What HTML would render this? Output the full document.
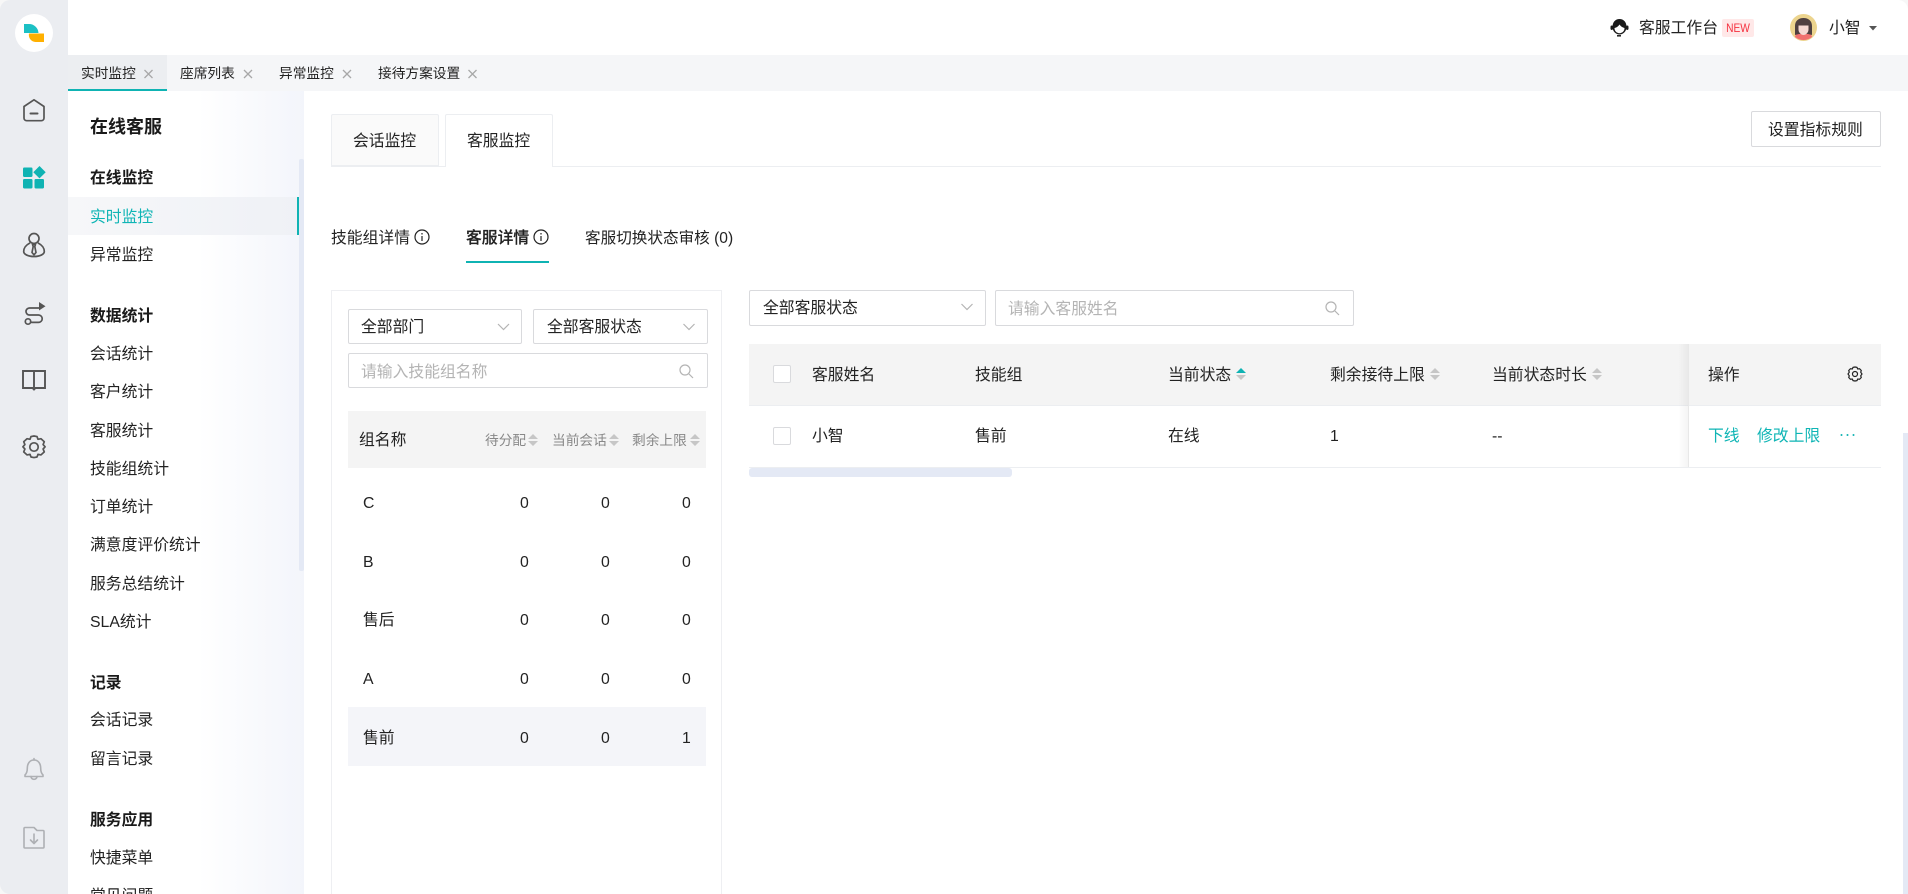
<!DOCTYPE html>
<html lang="zh-CN"><head><meta charset="utf-8"><title>实时监控</title>
<style>
*{box-sizing:border-box;margin:0;padding:0}
html,body{width:1908px;height:894px;overflow:hidden;background:#fff}
body{position:relative;font-family:"Liberation Sans","Noto Sans CJK SC",sans-serif;font-size:15.8px;color:#222}
.a{position:absolute}
.t{position:absolute;white-space:nowrap;line-height:24px;height:24px;margin-top:1px}
.b{font-weight:700;color:#1a1a1a}
.s{font-size:13.7px}
.box{position:absolute;border:1px solid #d9dadd;border-radius:2px;background:#fff}
.g{color:#888}
.ph{color:#b4b4b4}
.l{color:#0fb5b5}
svg{position:absolute;display:block;overflow:visible}
</style></head><body>

<!-- sidebar -->
<div class="a" style="left:0;top:0;width:68px;height:894px;background:#ebedf1"></div>
<div class="a" style="left:15px;top:14px;width:38px;height:38px;border-radius:50%;background:#fff"></div>
<svg style="left:0;top:0" width="68" height="480">
<path d="M24 24h5a9.500 9.500 0 0 1 9.500 9H24z" fill="#1cc0c4"/>
<path d="M29 33.500H44V42h-8.500a7 7 0 0 1-6.500-8.500z" fill="#ffb000"/>
<g fill="none" stroke="#555" stroke-width="1.700" stroke-linejoin="round" stroke-linecap="round">
<path d="M24 106.500 34 99.800l10 6.700v11.500a2.700 2.700 0 0 1-2.700 2.700H26.700a2.700 2.700 0 0 1-2.700-2.700z"/>
<path d="M30.500 113.500h7" stroke-width="2"/>
<circle cx="34" cy="238.500" r="5"/>
<path d="M29.500 243.200c-3.500 1.800-5.800 5-5.800 8.300 0 2.800 4.500 5 10.300 5s10.300-2.200 10.300-5c0-3.300-2.300-6.500-5.800-8.300"/>
<path d="M32.500 244.500h3l-.7 2 1.200 6-2 2.300-2-2.300 1.200-6z"/>
<path d="M39 308H29.500a3.500 3.500 0 0 0 0 7h9a3.700 3.700 0 0 1 0 7.400H31.500"/>
<circle cx="28" cy="321.500" r="2.700"/>
<path d="M23 371h22v17H35.500L34 389.500 32.500 388H23z" stroke-linejoin="miter" stroke-width="1.900"/>
<path d="M34 371v17" stroke-width="1.900"/>
<path d="M34 436.500l3 .6 1 2.700 3-.6 3.300 3-1.200 2.900 2 2.200-2 2.200 1.200 2.900-3.300 3-3-.6-1 2.700-3 .6-3-.6-1-2.700-3 .6-3.300-3 1.200-2.900-2-2.200 2-2.200-1.200-2.900 3.300-3 3 .6 1-2.700z" transform="translate(0 -.5)"/>
<circle cx="34" cy="447" r="4.200"/>
</g>
<path d="M39 302v8.500l6.500-4.200z" fill="#555"/>
<g fill="#0fb3b3">
<rect x="23" y="167.500" width="9.500" height="9.500" rx="1.200"/>
<rect x="23" y="179" width="9.500" height="9.500" rx="1.200"/>
<rect x="34.500" y="179" width="9.500" height="9.500" rx="1.200"/>
<path d="M39.500 166l6.200 6.200-6.200 6.200-6.200-6.200z"/>
</g>
</svg>
<svg style="left:0;top:750px" width="68" height="110">
<g fill="none" stroke="#aeb0b4" stroke-width="1.600" stroke-linejoin="round" stroke-linecap="round">
<g transform="translate(0 -5)">
<path d="M25 30c1.800-1.800 2.300-3.500 2.300-6.500 0-5 2.500-8.500 6.700-8.500s6.700 3.500 6.700 8.500c0 3 .5 4.700 2.300 6.500v1.500H25z"/>
<path d="M31 31.500a3 2.800 0 0 0 6 0"/>
<path d="M34 15v-1.500"/>
</g>
<path d="M24 78.500a1 1 0 0 1 1-1h9l3 3h6a1 1 0 0 1 1 1V97a1 1 0 0 1-1 1H25a1 1 0 0 1-1-1z"/>
<path d="M34 84v9M30.500 90l3.500 3.500 3.500-3.500"/>
</g>
</svg>

<!-- top tabs -->
<div class="a" style="left:68px;top:55px;width:1840px;height:36px;background:#f5f6f8"></div>
<div class="a" style="left:68px;top:55px;width:99px;height:36px;background:#eceef1;border-bottom:2px solid #0fb3b3"></div>
<div class="t s" style="left:81px;top:61px">实时监控</div>
<div class="t s" style="left:180px;top:61px">座席列表</div>
<div class="t s" style="left:279px;top:61px">异常监控</div>
<div class="t s" style="left:378px;top:61px">接待方案设置</div>
<svg style="left:0;top:0" width="500" height="91"><g stroke="#a8a8a8" stroke-width="1.300" fill="none">
<path d="M144.500 70l8 8M152.500 70l-8 8"/><path d="M244 70l8 8M252 70l-8 8"/><path d="M343 70l8 8M351 70l-8 8"/><path d="M468.500 70l8 8M476.500 70l-8 8"/></g></svg>

<!-- top right -->
<svg style="left:1610px;top:18px" width="19" height="19" viewBox="0 0 19 19">
<path d="M2.500 9C2.500 4 5.500 1 9.500 1s7 3 7 8c0 4-3 7.500-7 7.500s-7-3.500-7-7.500z" fill="#1a1a1a"/>
<path d="M4.500 10C7 9.500 8.500 8 9.500 6.500 11 8.500 12.500 9.500 14.500 10c0 3-2.200 5.200-5 5.200s-5-2.200-5-5.200z" fill="#fff"/>
<rect x="0.500" y="7.500" width="2.500" height="4.500" rx="1.200" fill="#1a1a1a"/>
<rect x="16" y="7.500" width="2.500" height="4.500" rx="1.200" fill="#1a1a1a"/>
<path d="M7 17.800h4" stroke="#1a1a1a" stroke-width="1.500"/>
</svg>
<div class="t" style="left:1639px;top:16px">客服工作台</div>
<div class="a" style="left:1722px;top:19px;width:32px;height:18px;background:#ffe8e8;border-radius:2px;color:#f5313f;font-size:12px;line-height:18px;text-align:center"><span style="display:inline-block;transform:scaleX(.85)">NEW</span></div>
<svg style="left:1790px;top:14px" width="27" height="27" viewBox="0 0 27 27">
<circle cx="13.500" cy="13.500" r="13.500" fill="#ecd48e"/>
<path d="M5 23c0-3 4-4 8.500-4s8.500 1 8.500 4a13.500 13.500 0 0 1-17 0z" fill="#f0706e"/>
<path d="M5 21V12c0-5 3.500-8 8.500-8s8.500 3 8.500 8v9l-4-1H9z" fill="#4f4040"/>
<path d="M8.500 11.500c2.500 0 8 0 10 0v4c0 3-2.500 5.500-5 5.500s-5-2.500-5-5.500z" fill="#f5d9d2"/>
</svg>
<div class="t" style="left:1829px;top:16px">小智</div>
<svg style="left:1869px;top:26px" width="8" height="5"><path d="M0 0h8L4 4.500z" fill="#555"/></svg>

<!-- left nav -->
<div class="a" style="left:68px;top:91px;width:236px;height:803px;background:linear-gradient(90deg,#fff 55%,#f3f5fb 100%)"></div>
<div class="a" style="left:68px;top:197px;width:231px;height:38px;background:linear-gradient(90deg,#f6f7f9,#eff1f6)"></div>
<div class="a" style="left:297px;top:197px;width:2px;height:38px;background:#0fb3b3"></div>
<div class="a" style="left:299px;top:159px;width:5px;height:412px;background:#e4e9f5;border-radius:2px"></div>
<div class="t b" style="left:90px;top:114px;font-size:18px">在线客服</div>
<div class="t b" style="left:90px;top:166px">在线监控</div>
<div class="t l" style="left:90px;top:205px">实时监控</div>
<div class="t" style="left:90px;top:243px">异常监控</div>
<div class="t b" style="left:90px;top:304px">数据统计</div>
<div class="t" style="left:90px;top:342px">会话统计</div>
<div class="t" style="left:90px;top:380px">客户统计</div>
<div class="t" style="left:90px;top:419px">客服统计</div>
<div class="t" style="left:90px;top:457px">技能组统计</div>
<div class="t" style="left:90px;top:495px">订单统计</div>
<div class="t" style="left:90px;top:533px">满意度评价统计</div>
<div class="t" style="left:90px;top:572px">服务总结统计</div>
<div class="t" style="left:90px;top:610px">SLA统计</div>
<div class="t b" style="left:90px;top:671px">记录</div>
<div class="t" style="left:90px;top:708px">会话记录</div>
<div class="t" style="left:90px;top:747px">留言记录</div>
<div class="t b" style="left:90px;top:808px">服务应用</div>
<div class="t" style="left:90px;top:846px">快捷菜单</div>
<div class="t" style="left:90px;top:884px">常见问题</div>

<!-- content tabs -->
<div class="a" style="left:331px;top:166px;width:1550px;height:1px;background:#eceef1"></div>
<div class="a" style="left:331px;top:114px;width:108px;height:52px;background:#fafafa;border:1px solid #eceef1;border-radius:2px 2px 0 0"></div>
<div class="a" style="left:445px;top:114px;width:108px;height:53px;background:#fff;border:1px solid #eceef1;border-bottom:0;border-radius:2px 2px 0 0"></div>
<div class="t" style="left:353px;top:129px">会话监控</div>
<div class="t" style="left:467px;top:129px">客服监控</div>
<div class="box" style="left:1751px;top:111px;width:130px;height:36px"></div>
<div class="t" style="left:1768px;top:118px">设置指标规则</div>

<!-- sub tabs -->
<div class="t" style="left:331px;top:226px">技能组详情</div>
<div class="t" style="left:466px;top:226px;font-weight:500;-webkit-text-stroke:.2px #222">客服详情</div>
<div class="t" style="left:585px;top:226px;font-size:15.6px">客服切换状态审核 (0)</div>
<svg style="left:0;top:0" width="600" height="270"><g fill="none" stroke="#222" stroke-width="1.200">
<circle cx="422" cy="237" r="7"/><path d="M422 236v5M422 233v1.500"/>
<circle cx="541" cy="237" r="7"/><path d="M541 236v5M541 233v1.500"/></g></svg>
<div class="a" style="left:466px;top:261px;width:83px;height:2px;background:#0fb3b3"></div>

<!-- left panel -->
<div class="a" style="left:331px;top:290px;width:391px;height:620px;border:1px solid #eeeff2"></div>
<div class="box" style="left:348px;top:309px;width:174px;height:35px"></div>
<div class="box" style="left:533px;top:309px;width:175px;height:35px"></div>
<div class="box" style="left:348px;top:353px;width:360px;height:35px"></div>
<div class="t" style="left:361px;top:315px">全部部门</div>
<div class="t" style="left:547px;top:315px">全部客服状态</div>
<div class="t ph" style="left:361px;top:360px">请输入技能组名称</div>
<svg style="left:0;top:0" width="760" height="400"><g fill="none" stroke="#b4b4b4" stroke-width="1.200">
<path d="M498 324l5.500 5.500 5.500-5.500"/><path d="M683.500 324l5.500 5.500 5.500-5.500"/>
<circle cx="685" cy="370" r="5"/><path d="M689 374l4 4"/></g></svg>
<div class="a" style="left:348px;top:411px;width:358px;height:57px;background:#f4f4f4"></div>
<div class="t" style="left:359px;top:428px">组名称</div>
<div class="t s g" style="left:485px;top:428px">待分配</div>
<div class="t s g" style="left:552px;top:428px">当前会话</div>
<div class="t s g" style="left:632px;top:428px">剩余上限</div>
<svg style="left:528px;top:433px" width="10" height="14"><path d="M0 6 5 1l5 5zM0 8h10l-5 5z" fill="#c6c6c6"/></svg>
<svg style="left:609px;top:433px" width="10" height="14"><path d="M0 6 5 1l5 5zM0 8h10l-5 5z" fill="#c6c6c6"/></svg>
<svg style="left:690px;top:433px" width="10" height="14"><path d="M0 6 5 1l5 5zM0 8h10l-5 5z" fill="#c6c6c6"/></svg>
<div class="a" style="left:348px;top:707px;width:358px;height:59px;background:#f4f5f9"></div>
<div class="t" style="left:363px;top:491px">C</div><div class="t" style="left:520px;top:491px">0</div><div class="t" style="left:601px;top:491px">0</div><div class="t" style="left:682px;top:491px">0</div>
<div class="t" style="left:363px;top:550px">B</div><div class="t" style="left:520px;top:550px">0</div><div class="t" style="left:601px;top:550px">0</div><div class="t" style="left:682px;top:550px">0</div>
<div class="t" style="left:363px;top:608px">售后</div><div class="t" style="left:520px;top:608px">0</div><div class="t" style="left:601px;top:608px">0</div><div class="t" style="left:682px;top:608px">0</div>
<div class="t" style="left:363px;top:667px">A</div><div class="t" style="left:520px;top:667px">0</div><div class="t" style="left:601px;top:667px">0</div><div class="t" style="left:682px;top:667px">0</div>
<div class="t" style="left:363px;top:726px">售前</div><div class="t" style="left:520px;top:726px">0</div><div class="t" style="left:601px;top:726px">0</div><div class="t" style="left:682px;top:726px">1</div>

<!-- right -->
<div class="box" style="left:749px;top:290px;width:237px;height:36px"></div>
<div class="box" style="left:995px;top:290px;width:359px;height:36px"></div>
<div class="t" style="left:763px;top:296px">全部客服状态</div>
<div class="t ph" style="left:1008px;top:297px">请输入客服姓名</div>
<svg style="left:0;top:0" width="1400" height="340"><g fill="none" stroke="#b4b4b4" stroke-width="1.200">
<path d="M961.500 304l5.500 5.500 5.500-5.500"/>
<circle cx="1331" cy="307" r="5"/><path d="M1335 311l4 4"/></g></svg>
<div class="a" style="left:749px;top:344px;width:1132px;height:61px;background:#f4f4f4"></div>
<div class="a" style="left:749px;top:405px;width:1132px;height:63px;border-top:1px solid #eceef1;border-bottom:1px solid #eceef1"></div>
<div class="a" style="left:1678px;top:344px;width:10px;height:123px;background:linear-gradient(90deg,rgba(0,0,0,0),rgba(0,0,0,.045))"></div>
<div class="a" style="left:1688px;top:344px;width:1px;height:123px;background:#e8e8e8"></div>
<div class="box" style="left:773px;top:365px;width:18px;height:18px"></div>
<div class="box" style="left:773px;top:427px;width:18px;height:18px"></div>
<div class="t" style="left:812px;top:363px">客服姓名</div>
<div class="t" style="left:975px;top:363px">技能组</div>
<div class="t" style="left:1168px;top:363px">当前状态</div>
<div class="t" style="left:1330px;top:363px">剩余接待上限</div>
<div class="t" style="left:1492px;top:363px">当前状态时长</div>
<div class="t" style="left:1708px;top:363px">操作</div>
<svg style="left:1236px;top:367px" width="10" height="14"><path d="M0 6 5 1l5 5z" fill="#0fb3b3"/><path d="M0 8h10l-5 5z" fill="#c6c6c6"/></svg>
<svg style="left:1430px;top:367px" width="10" height="14"><path d="M0 6 5 1l5 5zM0 8h10l-5 5z" fill="#c6c6c6"/></svg>
<svg style="left:1592px;top:367px" width="10" height="14"><path d="M0 6 5 1l5 5zM0 8h10l-5 5z" fill="#c6c6c6"/></svg>
<svg style="left:1847px;top:366px" width="16" height="16" viewBox="0 0 16 16"><g fill="none" stroke="#222" stroke-width="1.200" stroke-linejoin="round"><path d="M8 1l2 .4.700 1.600 1.800-.300 1.800 1.800-.600 1.700L15 8l-1.300 1.800.6 1.700-1.800 1.800-1.800-.300-.700 1.600-2 .4-2-.4-.7-1.600-1.800.3-1.800-1.800.6-1.700L1 8l1.300-1.800-.6-1.700 1.800-1.800 1.800.3.700-1.600z"/><circle cx="8" cy="8" r="2.500"/></g></svg>
<div class="t" style="left:812px;top:424px">小智</div>
<div class="t" style="left:975px;top:424px">售前</div>
<div class="t" style="left:1168px;top:424px">在线</div>
<div class="t" style="left:1330px;top:424px">1</div>
<div class="t" style="left:1492px;top:424px">--</div>
<div class="t l" style="left:1708px;top:424px">下线</div>
<div class="t l" style="left:1757px;top:424px">修改上限</div>
<svg style="left:1840px;top:433px" width="15" height="4"><g fill="#0fb3b3"><circle cx="1.500" cy="2" r="1"/><circle cx="7.500" cy="2" r="1"/><circle cx="13.500" cy="2" r="1"/></g></svg>
<div class="a" style="left:749px;top:468px;width:263px;height:9px;background:#e4e9f5;border-radius:3px"></div>
<div class="a" style="left:1903px;top:433px;width:5px;height:461px;background:#e4e9f5"></div>

<!-- window corners -->
<svg style="left:0;top:0" width="1908" height="894"><g fill="#f7f7f7">
<path d="M0 0h10A10 10 0 0 0 0 10z"/><path d="M1908 0h-10a10 10 0 0 1 10 10z"/><path d="M0 894v-10a10 10 0 0 0 10 10z"/></g></svg>
</body></html>
